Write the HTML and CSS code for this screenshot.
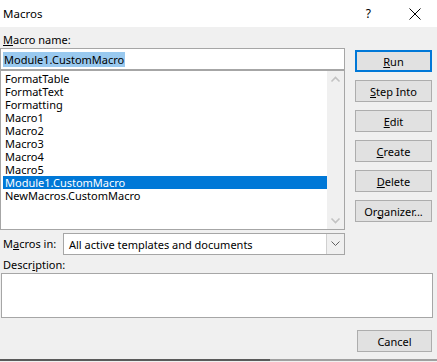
FILE: index.html
```html
<!DOCTYPE html>
<html lang="en">
<head>
  <meta charset="UTF-8" />
  <title>Macros</title>
  <link rel="stylesheet" href="styles.css">
</head>
<body>
  <!-- Title bar -->
  <div class="titlebar">
    <span class="title">Macros</span>
    <span class="help">?</span>
    <svg class="close" width="12" height="12" viewBox="0 0 12 12">
      <path d="M0.5 0.5 L11.5 11.5 M11.5 0.5 L0.5 11.5" stroke="#000" stroke-width="1" fill="none" />
    </svg>
  </div>

  <div class="dialog">
    <div class="top">
      <!-- Left side -->
      <div class="left">
        <div class="label"><u>M</u>acro name:</div>
        <div class="namebox"><span class="sel">Module1.CustomMacro</span></div>
        <div class="list">
          <div class="items">
            <div class="item">FormatTable</div>
            <div class="item">FormatText</div>
            <div class="item">Formatting</div>
            <div class="item">Macro1</div>
            <div class="item">Macro2</div>
            <div class="item">Macro3</div>
            <div class="item">Macro4</div>
            <div class="item">Macro5</div>
            <div class="item active">Module1.CustomMacro</div>
            <div class="item">NewMacros.CustomMacro</div>
          </div>
          <div class="scrollbar">
            <svg width="17" height="17" viewBox="0 0 17 17">
              <path d="M4.5 10.5 L8.5 6.5 L12.5 10.5" stroke="#c2c2c2" stroke-width="1.6" fill="none" />
            </svg>
            <svg width="17" height="17" viewBox="0 0 17 17">
              <path d="M4.5 6.5 L8.5 10.5 L12.5 6.5" stroke="#c2c2c2" stroke-width="1.6" fill="none" />
            </svg>
          </div>
        </div>
      </div>

      <!-- Buttons -->
      <div class="buttons">
        <button class="btn default"><u>R</u>un</button>
        <button class="btn"><u>S</u>tep Into</button>
        <button class="btn"><u>E</u>dit</button>
        <button class="btn"><u>C</u>reate</button>
        <button class="btn"><u>D</u>elete</button>
        <button class="btn">Or<u>g</u>anizer...</button>
      </div>
    </div>

    <div class="macros-in">
      <span class="label">M<u>a</u>cros in:</span>
      <div class="combo">
        <span class="combo-text">All active templates and documents</span>
        <span class="combo-btn">
          <svg width="9" height="6" viewBox="0 0 9 6">
            <path d="M0.5 0.5 L4.5 4.5 L8.5 0.5" stroke="#606060" stroke-width="1" fill="none" />
          </svg>
        </span>
      </div>
    </div>

    <div class="label desc-label">Descr<u>i</u>ption:</div>
    <div class="desc"></div>

    <div class="footer">
      <button class="btn cancel">Cancel</button>
    </div>
  </div>

  <div class="edge"><span class="dark"></span><span class="light"></span></div>
</body>
</html>
```

FILE: styles.css
```css
body {
  margin: 0;
  width: 437px;
  height: 362px;
  overflow: hidden;
  background: #f0f0f0;
  font-family: "Noto Sans", sans-serif;
  font-size: 11px;
  color: #000;
}

.titlebar {
  height: 27px;
  background: #fff;
  display: flex;
  align-items: center;
}

.title {
  padding-left: 3px;
  flex: 1;
  font-size: 11.5px;
}

.help {
  font-size: 12px;
  margin-right: 38px;
}

.close {
  margin-right: 16px;
}

.dialog {
  padding: 0 5px 0 0;
}

.top {
  display: flex;
}

.left {
  width: 345px;
}

.label {
  line-height: 16px;
  padding-left: 3px;
}

.top .label {
  margin-top: 5px;
}

.namebox {
  height: 20px;
  border: 1px solid #a6a6a6;
  background: #fff;
  display: flex;
  align-items: center;
  padding-left: 2px;
}

.sel {
  background: #99c9ef;
  padding: 0 1px;
  line-height: 15px;
}

.list {
  height: 158px;
  border: 1px solid #a6a6a6;
  background: #fff;
  display: flex;
}

.items {
  flex: 1;
  padding: 1px 0 0 2px;
}

.item {
  height: 13px;
  line-height: 13px;
  padding-left: 2px;
}

.item.active {
  background: #0078d7;
  color: #fff;
}

.scrollbar {
  width: 17px;
  background: #f0f0f0;
  display: flex;
  flex-direction: column;
  justify-content: space-between;
}

.buttons {
  margin-left: 10px;
  padding-top: 23px;
  display: flex;
  flex-direction: column;
  gap: 8px;
}

.btn {
  width: 77px;
  height: 22px;
  padding: 0;
  background: #e1e1e1;
  border: 1px solid #adadad;
  font-family: inherit;
  font-size: 11px;
  color: #000;
}

.btn.default {
  border: 2px solid #0078d7;
}

.macros-in {
  display: flex;
  align-items: center;
  margin-top: 3px;
}

.macros-in .label {
  width: 60px;
}

.combo {
  width: 280px;
  height: 20px;
  border: 1px solid #a6a6a6;
  background: #fff;
  display: flex;
  align-items: center;
}

.combo-text {
  flex: 1;
  padding-left: 5px;
}

.combo-btn {
  width: 17px;
  height: 20px;
  background: #f0f0f0;
  border-left: 1px solid #d0d0d0;
  display: flex;
  align-items: center;
  justify-content: center;
}

.desc-label {
  margin-top: 2px;
}

.desc {
  margin-left: 1px;
  width: 430px;
  height: 43px;
  border: 1px solid #a6a6a6;
  background: #fff;
}

.footer {
  display: flex;
  justify-content: flex-end;
  margin-top: 12px;
}

.cancel {
  width: 75px;
}

.edge {
  display: flex;
  margin-top: 7px;
  height: 2px;
}

.edge .dark {
  width: 270px;
  background: #5a5a5a;
}

.edge .light {
  flex: 1;
  background: #a0a0a0;
}
```
